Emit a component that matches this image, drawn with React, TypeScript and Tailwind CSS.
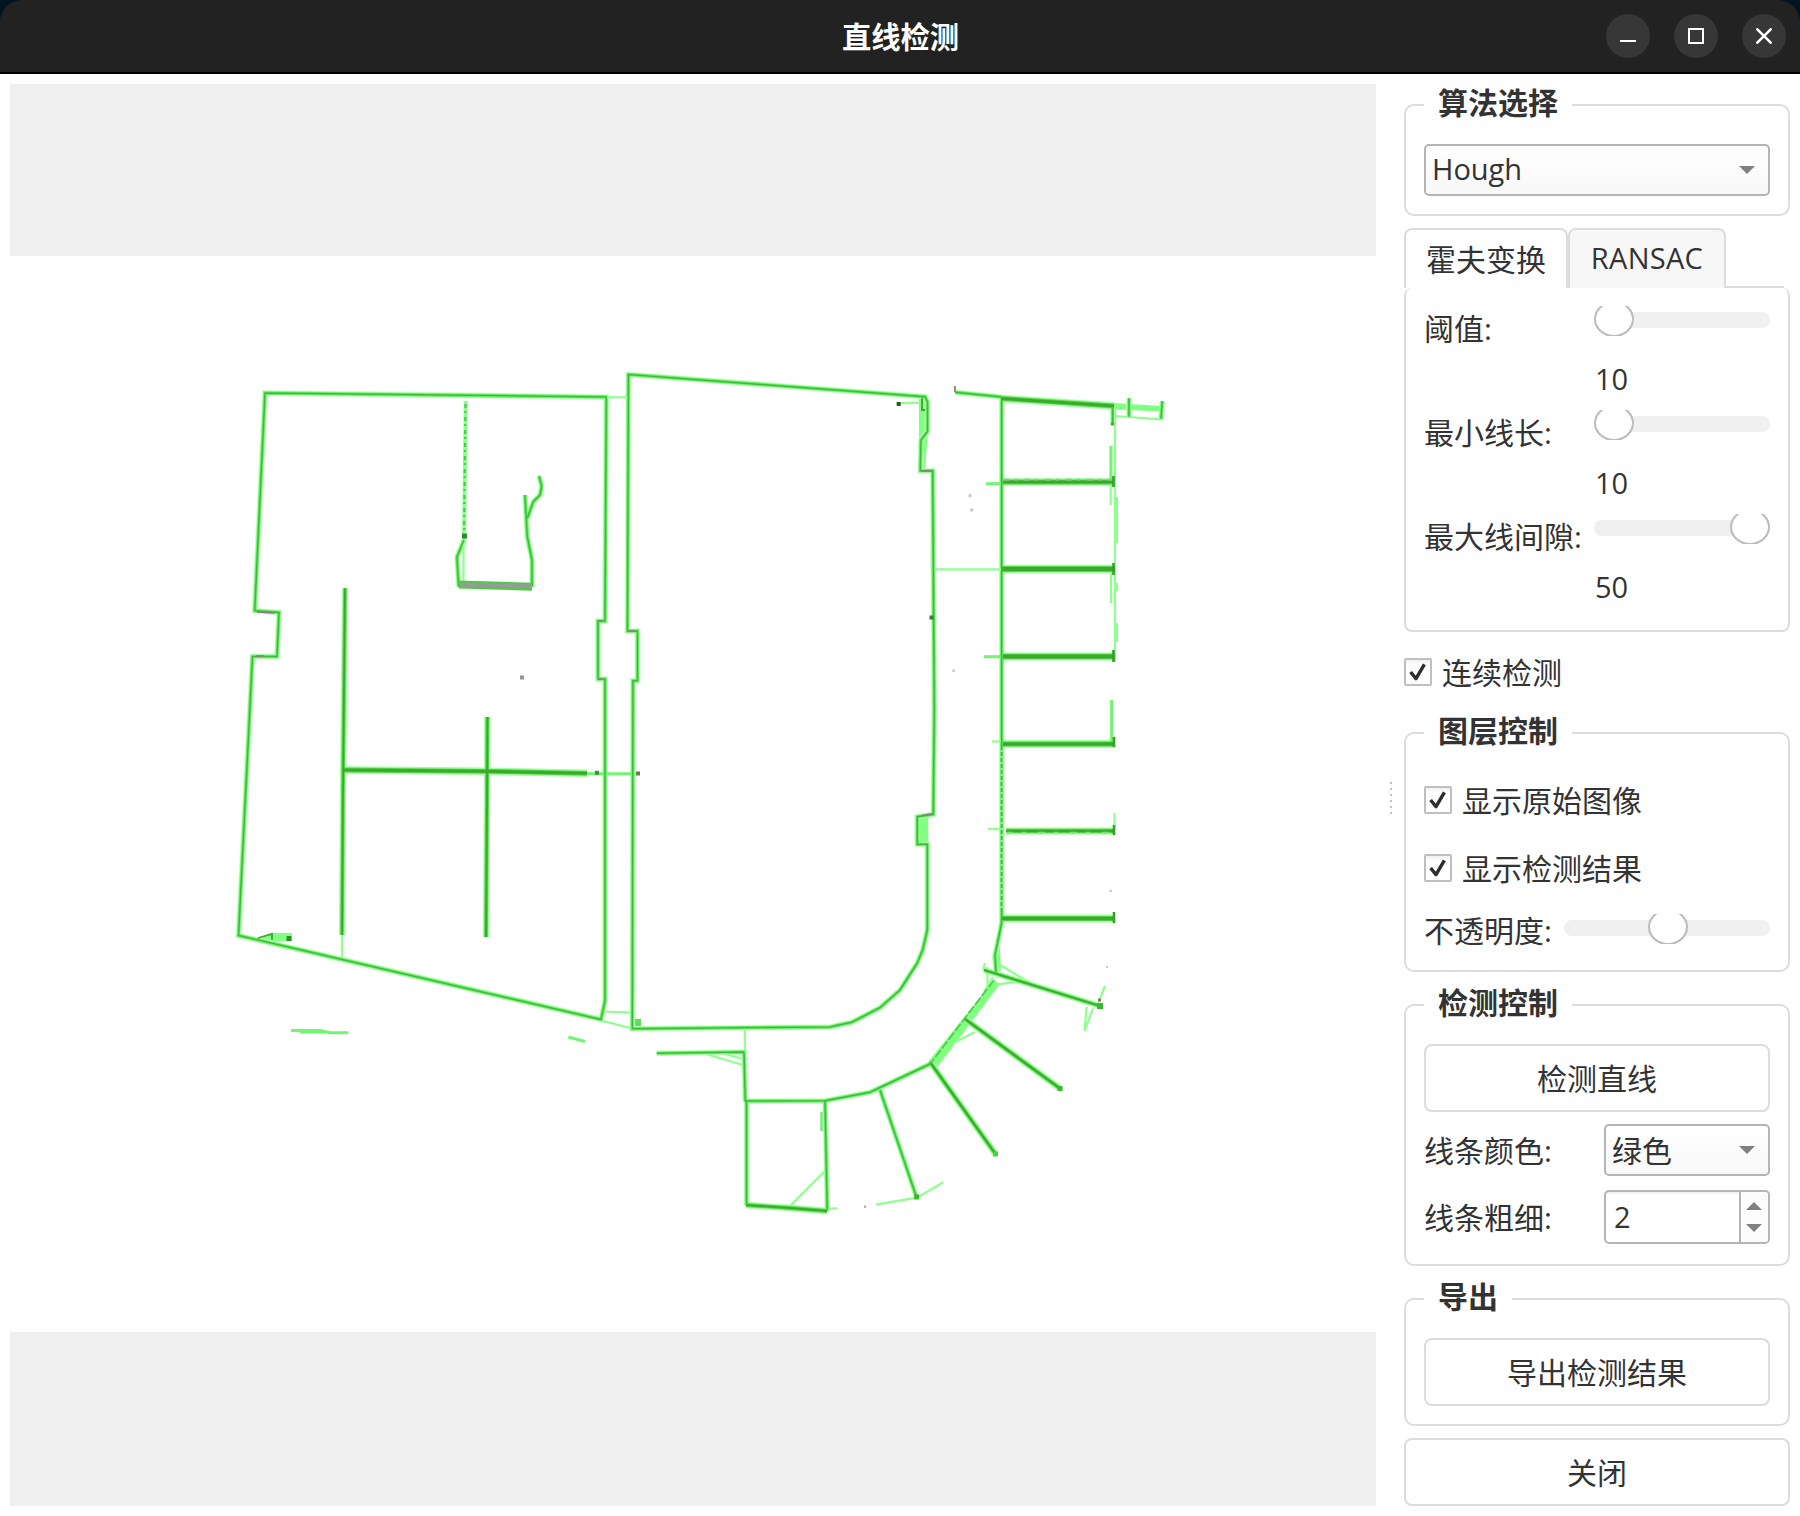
import React from "react";

const LIGHT = "#80ff80";
const HALO = "#c0ffc0";
const DARK = "#3cbc36";

type Stroke = { d: string; w?: number };

/* Detected outlines: pale halo, bright body and a darker core. */
const outlines: string[] = [
  "M265 393L606.3 397L605 621H598V679H605V1001L601 1019.5L238.5 935.5L252.5 656.5H277L279 612.5L254.7 610.7Z",
  "M628.4 374.5L925 396.7L927.5 401.7V431.5L921 440L920.3 470.8H932.7L934.3 710L933.3 814.3L917.3 816.7V844.3H927.3V930L922.7 950L917.3 963L900 990L880 1007.7L851.7 1022.3L830 1027L632.3 1028.7L633 680.7H637.5V631H627.5Z",
  "M955 392.3L1001.7 397",
  "M1001.7 397V922.4L1000 931L995 955L996 973",
  "M464 540L457 557L458.7 586.7",
  "M532 586.7V560L527.3 536.7L525 495",
  "M527.3 518.3L533.3 501.7L540 495L541.7 486L539 476",
  "M656.7 1053.3L744 1052L745.3 1101.7",
  "M746.5 1205V1101L825 1100.7L870 1092.3L930 1064",
  "M825 1100.7L827.3 1210.7",
  "M880 1090L916.7 1197.7",
  "M1129 398.3V416.7",
  "M1162.3 401L1161 419",
  "M1112.7 405V425",
];

/* Single faint segments. */
const faint: string[] = [
  "M606 397.3H628", "M603.5 1011.5L631 1012.5", "M601 1020.5L632 1028.5", "M463.5 540V583",
  "M342 935V957", "M934.5 569.3H1002", "M896.7 403H920", "M744.8 1028V1053",
  "M706.7 1054.3L743 1065M725 1054L743 1059", "M790 1206L824 1171.7", "M827 1209L837 1208",
  "M876 1204.7L916.7 1197.7L943.3 1182.3", "M1115 405V661.7", "M1117 497V543M1117 583V591M1117 623V642",
  "M1110.7 446V505", "M1111 573V603", "M1111.7 700V742", "M1114.5 813V828", "M987 483.7H1002",
  "M984 656.7H1002", "M992 741.5H1002", "M988 829H1002", "M998.3 963.8L1026.7 981L996.7 984.4",
  "M987 967L987.7 986M993 977L984 992", "M950 1044.7L975 1032", "M1105 986L1099 1001.6",
  "M1086.7 1006.8L1084.5 1031L1093 1008.5", "M1114 416L1129 417L1161 419.3", "M985 963L983 970",
];

/* Short bright segments. */
const bright: string[] = [
  "M574 773.4L600 773.7H634",
  "M291 1030.5L320 1030.5L330 1032.8H348.5M300 1032L325 1032",
  "M568.3 1037L585 1041.5",
  "M986 483.7H1001M984 656.7H1001",
  "M1111 446V480M1111.7 700V742",
];

/* Wide walls with a dark interior. */
const walls: Stroke[] = [
  { d: "M345 588.3L344 690L343 790L342 935", w: 2.2 },
  { d: "M344 770L488 771.3L587 773.3", w: 3.4 },
  { d: "M487.4 717L487 800L486 937", w: 2.4 },
  { d: "M1002 398.5L1114 406", w: 3.4 },
  { d: "M1003 482H1114", w: 3.4 },
  { d: "M1002 569H1115", w: 4.4 },
  { d: "M1003 656.5H1115", w: 4.2 },
  { d: "M1003 744H1115", w: 3.8 },
  { d: "M1006 831H1115", w: 3 },
  { d: "M1002 918.5H1115", w: 3.8 },
  { d: "M984 970L1100 1006", w: 2 },
  { d: "M965 1019L1060 1088.5", w: 2.4 },
  { d: "M930 1062L995.5 1154", w: 2.4 },
  { d: "M746 1205L790 1208L827 1211", w: 2.4 },
];

const specks: [number, number, number, string][] = [
  [522, 677.5, 4, "#a08f88"], [898.7, 404, 4, "#245c24"], [638, 773.5, 4, "#608538"],
  [970, 495.7, 3, "#c8c8c8"], [971.7, 510, 3, "#c8c8c8"], [953.5, 670.8, 2.5, "#c8c8c8"],
  [1110.5, 890.8, 2.5, "#cccccc"], [1107, 967, 2, "#d0cccc"], [865, 1206.7, 2, "#a9a0a0"],
  [931.5, 617.5, 4, "#3f7f42"], [464.5, 536, 5, "#2c8f2c"], [289, 938.5, 5, "#2f8f26"],
  [597, 772.8, 4, "#3a9430"], [1112.5, 424, 3, "#6c9340"], [1099.5, 1000, 3, "#6c8f3c"],
  [995.5, 1154, 5, "#45d83c"], [1060, 1088.5, 5, "#37b82e"], [916.7, 1197, 5, "#37b82e"],
  [1100, 1006, 6, "#37b82e"],
];

function FloorPlan() {
  return (
    <svg className="block h-full w-full" viewBox="10 256 1366 1076" fill="none" strokeLinejoin="miter">
      <g fill={LIGHT}>
        <path d="M919 398H927.8V432L925 471H919Z" />
        <path d="M918 815H928.3V844H918Z" />
        <path d="M260 939L270 933H292V941H268Z" />
        <path d="M634 1019H641V1028H634Z" fill="#5fdc5a" />
        <path d="M1114 403L1162 406V411.5L1114 409.5Z" />
        <path d="M994 980L1000 984L936 1069L928 1062Z" />
        <path d="M992 958L999 930L1001 970L996 975Z" />
      </g>
      {outlines.map((d) => (
        <path key={d} d={d} stroke={HALO} strokeWidth="5.6" />
      ))}
      {walls.map(({ d, w = 3 }) => (
        <path key={d} d={d} stroke="#9dff9d" strokeWidth={w + 4} />
      ))}
      {outlines.map((d) => (
        <path key={d} d={d} stroke="#70ee6e" strokeWidth="3.6" />
      ))}
      {faint.map((d) => (
        <path key={d} d={d} stroke="#8fff8f" strokeWidth="2.2" />
      ))}
      {bright.map((d) => (
        <path key={d} d={d} stroke="#74f472" strokeWidth="3" />
      ))}
      {outlines.map((d) => (
        <path key={d} d={d} stroke={DARK} strokeWidth="1.5" />
      ))}
      {walls.map(({ d, w = 3 }) => (
        <path key={d} d={d} stroke="#55d84e" strokeWidth={w + 1.4} />
      ))}
      {walls.map(({ d, w = 3 }) => (
        <path key={d} d={d} stroke="#3ea82c" strokeWidth={w - 0.4} />
      ))}
      <path d="M994 980L965 1018L931 1063" stroke="#4bcf46" strokeWidth="1.8" strokeDasharray="9 2" />
      {/* dotted partition and uneven scan returns */}
      <path d="M465.8 401L464 540" stroke="#8dff8d" strokeWidth="4" />
      <path d="M465.5 404L464 540" stroke="#4cc948" strokeWidth="2.2" strokeDasharray="4 3 2 4" />
      <path d="M1003 479.5H1114" stroke="#98c898" strokeWidth="2" strokeDasharray="6 5 3 7" />
      <path d="M1006 832.5H1114" stroke="#72e86c" strokeWidth="1.4" strokeDasharray="7 9 4 12" />
      <path d="M1001.7 750V912" stroke="#83f883" strokeWidth="2.4" strokeDasharray="2 4" />
      {/* bay end caps */}
      <path d="M1113.5 476V487M1113.5 563V575M1113.5 650V662M1114 737V747M1114 825V835M1114 912V923" stroke="#2fa324" strokeWidth="2.6" />
      {/* unmatched source pixels */}
      <path d="M458.7 584.6L532 586.7" stroke="#4ccc48" strokeWidth="8" />
      <path d="M459 584.4L532 586.3" stroke="#999999" strokeWidth="4" />
      <path d="M598.5 621H603M598.5 679H603M628 631H636M257 612L274 613M256 656H264M921 471H932M922 815.5L932 814" stroke="#8b7f7f" strokeWidth="1.6" />
      <path d="M955 386V392" stroke="#a08a84" strokeWidth="2" />
      <path d="M258 938L272 934V940M922 398V410H925" stroke="#37a82d" strokeWidth="1.8" />
      <path d="M821.5 1112V1131" stroke="#80e880" strokeWidth="2.6" />
      {specks.map(([x, y, s, c]) => (
        <rect key={x + "-" + y} x={x - s / 2} y={y - s / 2} width={s} height={s} fill={c} />
      ))}
    </svg>
  );
}

function Group({ title, className, children }: { title: string; className: string; children: React.ReactNode }) {
  return (
    <section className={"relative flex flex-none flex-col rounded-[10px] border-2 border-[#dcdcdc] px-[18px] pt-[38px] " + className}>
      <h2 className="absolute -top-[23px] left-[18px] h-10 bg-white px-3.5 text-[30px] leading-10 font-bold">{title}</h2>
      {children}
    </section>
  );
}

function Slider({ className, handle }: { className: string; handle: string }) {
  return (
    <div className={"relative h-[30px] overflow-hidden " + className}>
      <div className="mt-1.5 h-4 rounded-full bg-[#f0f0f0]" />
      <div className={"absolute -top-[5px] h-9 w-10 rounded-[50%] border-2 border-[#bcbcbc] bg-white " + handle} />
    </div>
  );
}

function Param({ label, value, handle }: { label: string; value: string; handle: string }) {
  return (
    <div className="flex h-[104px] justify-between">
      <span className="pt-[3px] leading-10">{label}</span>
      <div className="w-44">
        <Slider className="w-44" handle={handle} />
        <div className="mt-[23px] pl-px text-[29px] leading-10">{value}</div>
      </div>
    </div>
  );
}

function Check({ label }: { label: string }) {
  return (
    <label className="flex h-7 flex-none items-center gap-2.5">
      <span className="flex size-7 flex-none items-center justify-center rounded-[2px] border-2 border-[#bfbfbf] bg-linear-to-b from-[#f0f0f0] to-white to-20%">
        <svg className="size-6" viewBox="0 0 24 24" fill="none" stroke="#2d2d2d" strokeWidth="3.4">
          <path d="M4.6 12L10 18.6L18.4 4.4" strokeLinejoin="round" />
        </svg>
      </span>
      <span className="pt-0.5 leading-10">{label}</span>
    </label>
  );
}

function Caret({ up = false }: { up?: boolean }) {
  return (
    <svg className="h-2 w-4" viewBox="0 0 16 8" fill="#808080">
      {up ? <path d="M0 8L8 0L16 8Z" /> : <path d="M0 0H16L8 8Z" />}
    </svg>
  );
}

function Combo({ children, className }: { children: React.ReactNode; className: string }) {
  return (
    <div className={"flex h-[52px] flex-none items-center justify-between rounded-[5px] border-2 border-[#b4b4b4] bg-linear-to-b from-white to-[#f8f8f8] pr-[13px] pl-1.5 " + className}>
      {children}
      <Caret />
    </div>
  );
}

function Button({ children }: { children: React.ReactNode }) {
  return (
    <button className="flex h-[68px] w-full flex-none items-center justify-center rounded-lg border-2 border-[#dcdcdc] bg-white">
      {children}
    </button>
  );
}

export default function App() {
  return (
    <div className="flex h-[1516px] w-[1800px] flex-col overflow-hidden bg-white font-['Open_Sans','Noto_Sans_CJK_SC',sans-serif] text-[30px] text-[#333333]">
      <header className="h-[74px] flex-none bg-[#021420]">
        <div className="grid h-[74px] grid-cols-[1fr_auto_1fr] items-center rounded-t-[22px] border-b-2 border-black bg-[#222222]">
          <span />
          <h1 className="pt-0.5 pl-px text-[29.3px] leading-10 font-bold text-white">直线检测</h1>
          <div className="flex justify-end gap-6 pr-3.5">
            <span className="flex size-11 items-center justify-center rounded-full bg-[#373737]">
              <svg className="size-4" viewBox="0 0 16 16" fill="#fff"><path d="M0 12H16V14H0Z" /></svg>
            </span>
            <span className="flex size-11 items-center justify-center rounded-full bg-[#373737]">
              <svg className="size-4" viewBox="0 0 16 16" fill="none" stroke="#fff" strokeWidth="2"><path d="M1 1H15V15H1Z" /></svg>
            </span>
            <span className="flex size-11 items-center justify-center rounded-full bg-[#373737]">
              <svg className="size-4" viewBox="0 0 16 16" fill="none" stroke="#fff" strokeWidth="2.6" strokeLinecap="round"><path d="M1.3 1.3L14.7 14.7M14.7 1.3L1.3 14.7" /></svg>
            </span>
          </div>
        </div>
      </header>

      <div className="flex min-h-0 flex-1 p-2.5">
        <main className="w-[1366px] flex-none bg-[#f0f0f0] pt-[172px]">
          <div className="h-[1076px] bg-white">
            <FloorPlan />
          </div>
        </main>

        <div className="flex w-7 flex-none flex-col items-center justify-center gap-1 pt-1.5 pl-px">
          {[0, 1, 2, 3, 4, 5].map((i) => (
            <span key={i} className="size-0.5 bg-[#c0c0c0]" />
          ))}
        </div>

        <aside className="flex w-[386px] flex-none flex-col pt-5">
          <Group title="算法选择" className="h-[112px]">
            <Combo className="text-[29px]">
              <span className="pb-0.5 leading-10">Hough</span>
            </Combo>
          </Group>

          <div className="mt-3 flex h-[60px] flex-none">
            <div className="flex w-[164px] items-center justify-center rounded-t-lg border-2 border-b-0 border-[#dcdcdc] bg-white pt-0.5 leading-10">霍夫变换</div>
            <div className="flex w-[158px] items-center justify-center rounded-t-lg border-2 border-b-0 border-[#dcdcdc] bg-[#f7f7f7] pb-0.5 text-[29px] leading-10 tracking-[0.3px]">RANSAC</div>
            <div className="mt-auto mr-1.5 h-0.5 flex-1 bg-[#dcdcdc]" />
          </div>
          <div className="h-[344px] flex-none rounded-[8px] border-2 border-t-0 border-[#dcdcdc] px-[18px] pt-[18px]">
            <Param label="阈值:" value="10" handle="left-0" />
            <Param label="最小线长:" value="10" handle="left-0" />
            <Param label="最大线间隙:" value="50" handle="right-0" />
          </div>

          <div className="mt-[26px] mb-[46px] flex-none">
            <Check label="连续检测" />
          </div>

          <Group title="图层控制" className="h-[240px]">
            <div className="mt-3.5 flex flex-col gap-10">
              <Check label="显示原始图像" />
              <Check label="显示检测结果" />
            </div>
            <div className="mt-[29px] flex justify-between">
              <span className="leading-10">不透明度:</span>
              <Slider className="mt-[3px] w-[206px]" handle="left-[84px]" />
            </div>
          </Group>

          <Group title="检测控制" className="mt-8 h-[262px]">
            <Button>检测直线</Button>
            <div className="mt-3 flex items-center justify-between">
              <span className="pt-0.5 leading-10">线条颜色:</span>
              <Combo className="w-[166px]">
                <span className="pt-0.5 leading-10">绿色</span>
              </Combo>
            </div>
            <div className="mt-3.5 flex items-center justify-between">
              <span className="pt-0.5 leading-10">线条粗细:</span>
              <div className="flex h-[54px] w-[166px] overflow-hidden rounded-[5px] border-2 border-[#b4b4b4] bg-linear-to-b from-[#ededed] to-white to-6%">
                <span className="flex-1 pl-2 text-[29px] leading-[50px]">2</span>
                <span className="flex w-[29px] flex-col items-center justify-center gap-3.5 border-l-2 border-[#b4b4b4] bg-[#fcfcfc] pr-0.5">
                  <Caret up />
                  <Caret />
                </span>
              </div>
            </div>
          </Group>

          <Group title="导出" className="mt-8 mb-3 h-[128px]">
            <Button>导出检测结果</Button>
          </Group>
          <Button>关闭</Button>
        </aside>
      </div>
    </div>
  );
}
